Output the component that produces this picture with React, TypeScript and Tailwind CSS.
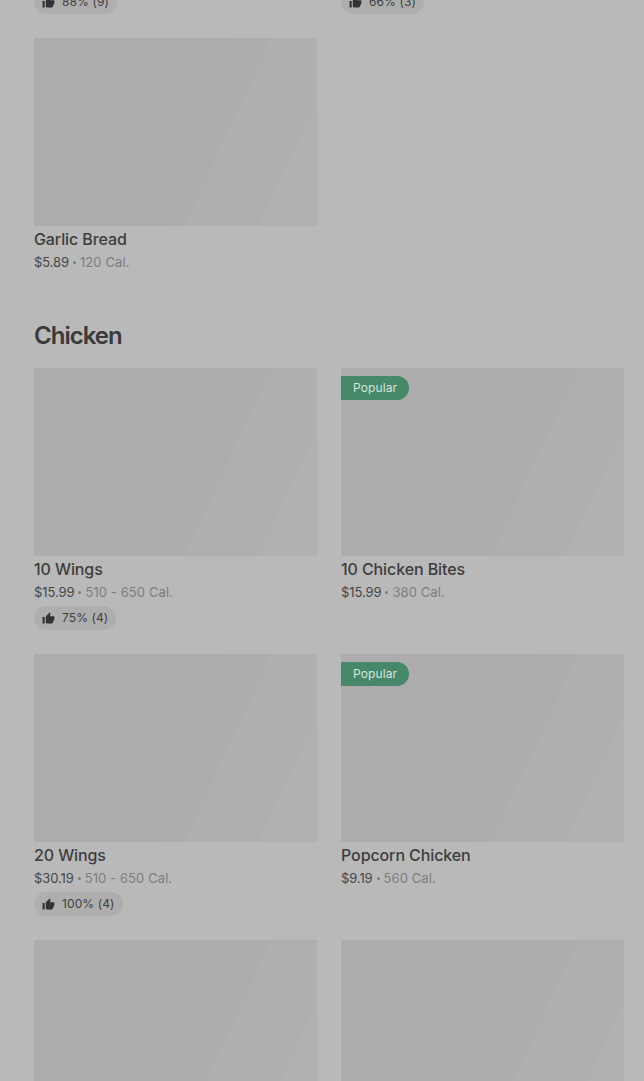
import { MdThumbUp } from 'react-icons/md'

interface Item {
  name: string
  price: string
  cal: string
  rating?: string
  popular?: boolean
}

const chicken: Item[] = [
  { name: '10 Wings', price: '$15.99', cal: '510 - 650 Cal.', rating: '75% (4)' },
  { name: '10 Chicken Bites', price: '$15.99', cal: '380 Cal.', popular: true },
  { name: '20 Wings', price: '$30.19', cal: '510 - 650 Cal.', rating: '100% (4)' },
  { name: 'Popcorn Chicken', price: '$9.19', cal: '560 Cal.', popular: true },
]

function Rating({ label }: { label: string }) {
  return (
    <div className="inline-flex h-6 items-center gap-[7px] rounded-full bg-[#aeaeae] pl-2 pr-2 text-xs tracking-[0.1px] text-[#3f3f3f]">
      <MdThumbUp className="h-[13px] w-[13px] text-[#333333]" />
      <span>{label}</span>
    </div>
  )
}

function CardImage({ popular }: { popular?: boolean }) {
  return (
    <div className="relative h-[188px] bg-[linear-gradient(115deg,#acacac_0%,#adadad_64%,#afafaf_64.5%,#afafaf_84%,#b1b1b1_84.5%,#b1b1b1_100%)]">
      {popular && (
        <div className="absolute left-0 top-2 flex h-6 items-center rounded-r-full bg-[#46886a] pl-3 pr-3 text-xs tracking-[0.1px] text-[#d6e4dc]">
          Popular
        </div>
      )}
    </div>
  )
}

function MenuCard({ item }: { item: Item }) {
  return (
    <div>
      <CardImage popular={item.popular} />
      <div className="mt-px text-base font-medium leading-6 tracking-[-0.1px] text-[#3d3d3d]">{item.name}</div>
      <div className="mt-px flex items-center text-[13px] leading-5">
        <span className="tracking-[-0.1px] text-[#474747]">{item.price}</span>
        <span className="mx-1 h-[3px] w-[3px] rounded-full bg-[#7d7d7d]" />
        <span className="tracking-[0.1px] text-[#7d7d7d]">{item.cal}</span>
      </div>
      {item.rating && (
        <div className="mt-1 flex">
          <Rating label={item.rating} />
        </div>
      )}
    </div>
  )
}

export default function App() {
  return (
    <div className="h-[1081px] overflow-hidden bg-[#b9b9b9] pl-[34px] pr-5 font-['Inter',sans-serif]">
      <div className="-mt-[10px] grid grid-cols-2 gap-x-6">
        <div className="flex">
          <Rating label="88% (9)" />
        </div>
        <div className="flex">
          <Rating label="66% (3)" />
        </div>
      </div>

      <div className="mt-6 grid grid-cols-2 gap-x-6">
        <MenuCard item={{ name: 'Garlic Bread', price: '$5.89', cal: '120 Cal.' }} />
      </div>

      <h2 className="mb-4 mt-12 text-2xl font-semibold leading-8 tracking-[-1px] text-[#3a3a3a]">Chicken</h2>

      <div className="grid grid-cols-2 gap-x-6 gap-y-6">
        {chicken.map(item => (
          <MenuCard key={item.name} item={item} />
        ))}
        <CardImage />
        <CardImage />
      </div>
    </div>
  )
}
